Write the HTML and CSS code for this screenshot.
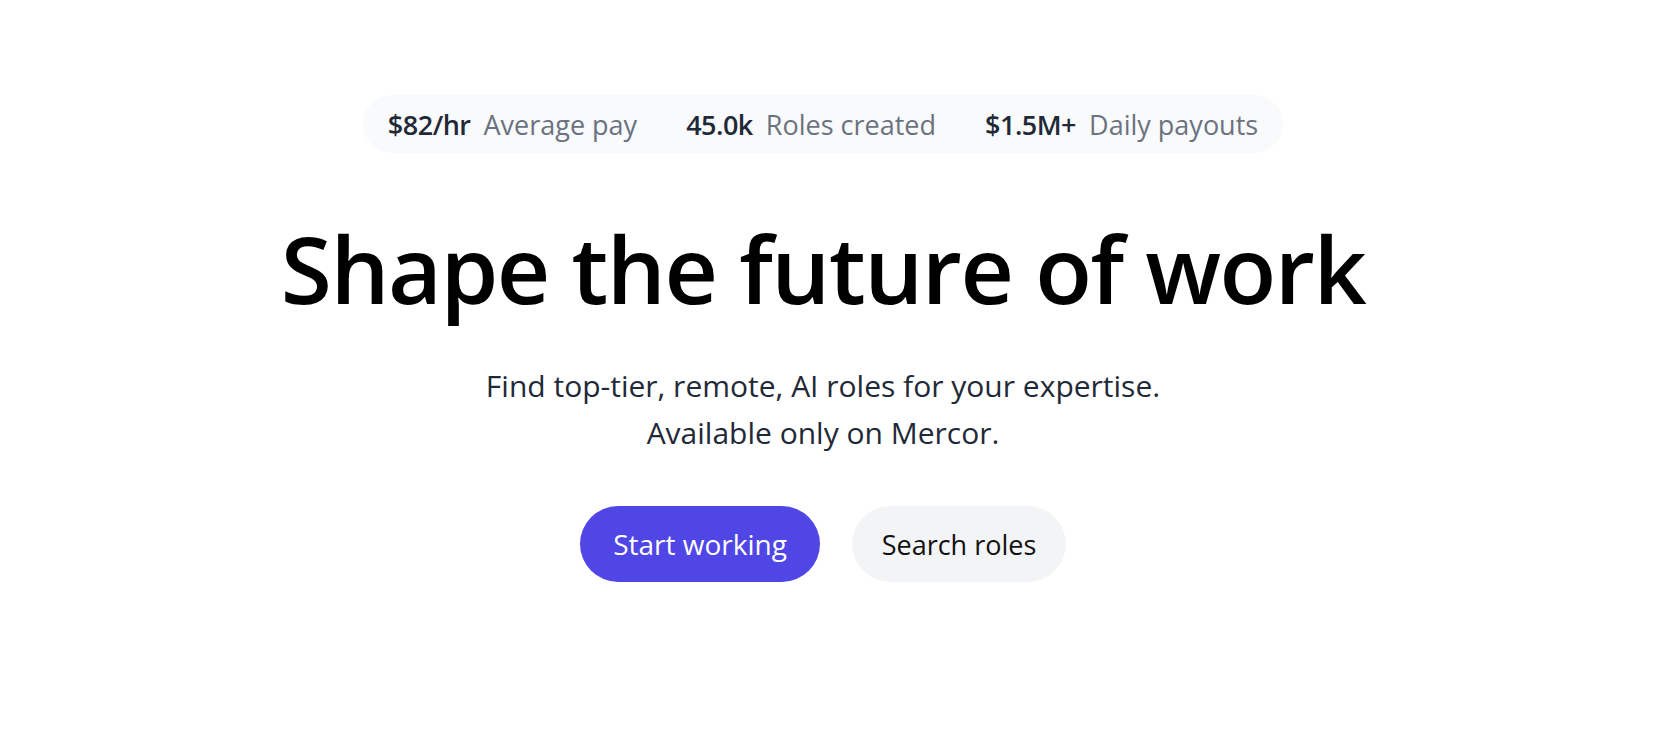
FILE: index.html
```html
<!DOCTYPE html>
<html lang="en">
<head>
<meta charset="utf-8">
<title>Mercor</title>
<link rel="stylesheet" href="styles.css">
</head>
<body>
<main class="hero">
  <div class="stats">
    <div class="stat"><span class="stat-value">$82/hr</span><span class="stat-label">Average pay</span></div>
    <div class="stat"><span class="stat-value">45.0k</span><span class="stat-label">Roles created</span></div>
    <div class="stat"><span class="stat-value">$1.5M+</span><span class="stat-label">Daily payouts</span></div>
  </div>
  <h1 class="title">Shape the future of work</h1>
  <p class="subtitle">Find top-tier, remote, AI roles for your expertise.<br>Available only on Mercor.</p>
  <div class="actions">
    <a class="btn btn-primary" href="#">Start working</a>
    <a class="btn btn-secondary" href="#">Search roles</a>
  </div>
</main>
</body>
</html>
```
FILE: styles.css
```css
* { box-sizing: border-box; }
html, body { margin: 0; padding: 0; background: #ffffff; }
body { font-family: "Open Sans", "Noto Sans", sans-serif; color: #111827; }

.hero {
  display: flex;
  flex-direction: column;
  align-items: center;
  padding: 95px 10px 0 0;
}

.stats {
  display: flex;
  align-items: center;
  gap: 49px;
  height: 58px;
  padding: 0 25px;
  border-radius: 9999px;
  background: #f9fafb;
  font-size: 27px;
}
.stat { display: flex; align-items: baseline; gap: 13px; }
.stat-value { font-weight: 600; color: #1f2937; letter-spacing: -0.5px; }
.stat-label { font-weight: 500; color: #6b7280; }

.title {
  margin: 69px 0 0;
  font-size: 93px;
  line-height: 93px;
  font-weight: 600;
  color: #000;
  letter-spacing: -1.5px;
}

.subtitle {
  margin: 47px 0 0;
  font-size: 30px;
  line-height: 47px;
  text-align: center;
  color: #1f2937;
}

.actions {
  display: flex;
  gap: 32px;
  margin-top: 50px;
}
.btn {
  display: flex;
  align-items: center;
  justify-content: center;
  height: 76px;
  border-radius: 9999px;
  font-size: 27px;
  text-decoration: none;
}
.btn-primary { width: 240px; background: #4f46e5; color: #fff; font-size: 28px; }
.btn-secondary { width: 214px; background: #f3f4f6; color: #111; }
```
